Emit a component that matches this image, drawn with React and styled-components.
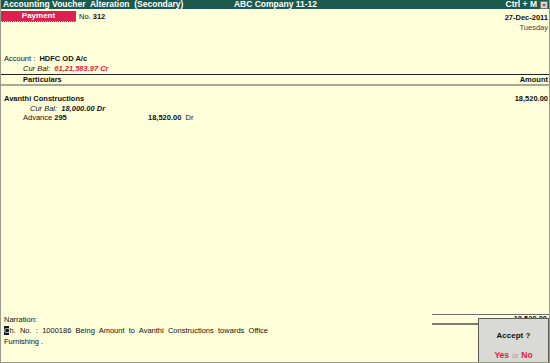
import styled, { createGlobalStyle } from "styled-components";

const paper = "#ffffd9";
const tallyGreen = "#1b5a4c";
const crimson = "#dc2151";
const redText = "#e5203c";

const GlobalStyle = createGlobalStyle`
  html, body {
    margin: 0;
    padding: 0;
    background: ${paper};
  }
  body {
    font-family: "Liberation Sans", Arial, sans-serif;
    font-size: 7.5px;
    color: #111;
  }
`;

const Frame = styled.div`
  position: relative;
  display: flex;
  flex-direction: column;
  width: 550px;
  height: 363px;
  box-sizing: border-box;
  border-left: 1px solid #9a9a8a;
  border-right: 1px solid #9a9a8a;
  border-bottom: 1px solid #9a9a8a;
  background: ${paper};
  overflow: hidden;
`;

const TitleBar = styled.div`
  display: grid;
  grid-template-columns: 1fr auto 1fr;
  align-items: center;
  height: 9px;
  padding: 0 1px 0 2px;
  background: ${tallyGreen};
  color: #fff;
  font-size: 8.5px;
  font-weight: bold;
  line-height: 9px;
  white-space: pre;
`;

const TitleRight = styled.div`
  display: flex;
  justify-content: flex-end;
  align-items: center;
  gap: 3px;
`;

const CloseBox = styled.span`
  display: flex;
  align-items: center;
  justify-content: center;
  width: 8px;
  height: 8px;
  box-sizing: border-box;
  background: #d8d8d0;
  border: 1px solid #777;
  color: #333;
  font-size: 6px;
  line-height: 6px;
`;

const VoucherHead = styled.div`
  display: flex;
  justify-content: space-between;
  padding: 2px 1px 0 0;
  height: 30px;
`;

const TypeRow = styled.div`
  display: flex;
  align-items: center;
  gap: 3px;
  height: 11px;
`;

const TypeBadge = styled.div`
  width: 75px;
  height: 10px;
  line-height: 10px;
  background: ${crimson};
  color: #fff;
  text-align: center;
  font-size: 8px;
  font-weight: bold;
  border-bottom: 1px dotted #f6b0c2;
`;

const Bold = styled.span`
  font-weight: bold;
`;

const DateBlock = styled.div`
  display: flex;
  flex-direction: column;
  align-items: flex-end;
  padding-top: 2px;
  line-height: 10px;
`;

const DayName = styled.span`
  color: #444;
`;

const AccountBlock = styled.div`
  padding: 13px 0 0 3px;
  line-height: 9.5px;
`;

const Indent = styled.div`
  padding-left: ${(p) => p.$left || 0}px;
`;

const Italic = styled.span`
  font-style: italic;
  color: ${(p) => p.$color || "inherit"};
  font-weight: ${(p) => (p.$bold ? "bold" : "normal")};
`;

const ColumnHead = styled.div`
  display: flex;
  justify-content: space-between;
  margin-top: 1px;
  padding: 0 1px 0 22px;
  height: 9px;
  line-height: 9px;
  border-top: 1px solid #222;
  border-bottom: 2px solid #a7a79a;
  font-weight: bold;
`;

const Entries = styled.div`
  display: flex;
  flex-direction: column;
  padding: 8px 1px 0 3px;
  line-height: 9.5px;
`;

const EntryRow = styled.div`
  display: flex;
  justify-content: space-between;
`;

const BillRow = styled.div`
  display: grid;
  grid-template-columns: 125px auto;
  padding-left: 19px;
`;

const Spacer = styled.div`
  flex: 1;
`;

const Footer = styled.div`
  display: flex;
  justify-content: space-between;
  align-items: flex-start;
  height: 48px;
`;

const Narration = styled.div`
  width: 264px;
  padding: 0 0 0 3px;
  line-height: 11px;
  text-align: justify;
`;

const Cursor = styled.span`
  background: #1a1a1a;
  color: #eee;
`;

const Totals = styled.div`
  width: 117px;
  border-top: 1px solid #6e6e66;
`;

const TotalValue = styled.div`
  text-align: right;
  padding-right: 2px;
  height: 8px;
  line-height: 8px;
  font-weight: bold;
  border-bottom: 2px solid #7a7a72;
`;

const AcceptBox = styled.div`
  position: absolute;
  right: 0;
  bottom: 0;
  width: 71px;
  height: 44px;
  box-sizing: border-box;
  display: flex;
  flex-direction: column;
  align-items: center;
  justify-content: space-between;
  padding: 12px 0 2px;
  background: #d9d9d6;
  border: 1px solid #5c5c5c;
  border-bottom: none;
`;

const AcceptTitle = styled.div`
  font-weight: bold;
  font-size: 8px;
`;

const Choice = styled.div`
  display: flex;
  gap: 3px;
  align-items: baseline;
  font-size: 8.5px;
  font-weight: bold;
  color: ${redText};
`;

const Or = styled.span`
  font-size: 7px;
  font-weight: normal;
  color: #999;
`;

export default function App() {
  return (
    <>
      <GlobalStyle />
      <Frame>
        <TitleBar>
          <span>Accounting Voucher  Alteration  (Secondary)</span>
          <span>ABC Company 11-12</span>
          <TitleRight>
            <span>Ctrl + M</span>
            <CloseBox>×</CloseBox>
          </TitleRight>
        </TitleBar>

        <VoucherHead>
          <TypeRow>
            <TypeBadge>Payment</TypeBadge>
            <span>
              No. <Bold>312</Bold>
            </span>
          </TypeRow>
          <DateBlock>
            <Bold>27-Dec-2011</Bold>
            <DayName>Tuesday</DayName>
          </DateBlock>
        </VoucherHead>

        <AccountBlock>
          <div>
            Account :&nbsp; <Bold>HDFC OD A/c</Bold>
          </div>
          <Indent $left={19}>
            <Italic>Cur Bal:</Italic>&nbsp;{" "}
            <Italic $bold $color={redText}>
              61,21,583.97 Cr
            </Italic>
          </Indent>
        </AccountBlock>

        <ColumnHead>
          <span>Particulars</span>
          <span>Amount</span>
        </ColumnHead>

        <Entries>
          <EntryRow>
            <Bold>Avanthi Constructions</Bold>
            <Bold>18,520.00</Bold>
          </EntryRow>
          <Indent $left={26}>
            <Italic>Cur Bal:</Italic>&nbsp;{" "}
            <Italic $bold>18,000.00 Dr</Italic>
          </Indent>
          <BillRow>
            <span>
              Advance <Bold>295</Bold>
            </span>
            <span>
              <Bold>18,520.00</Bold>&nbsp; Dr
            </span>
          </BillRow>
        </Entries>

        <Spacer />

        <Footer>
          <Narration>
            Narration:
            <br />
            <Cursor>C</Cursor>h. No. : 1000186 Being Amount to Avanthi
            Constructions towards Office Furnishing .
          </Narration>
          <Totals>
            <TotalValue>18,520.00</TotalValue>
          </Totals>
        </Footer>

        <AcceptBox>
          <AcceptTitle>Accept ?</AcceptTitle>
          <Choice>
            Yes <Or>or</Or> No
          </Choice>
        </AcceptBox>
      </Frame>
    </>
  );
}
